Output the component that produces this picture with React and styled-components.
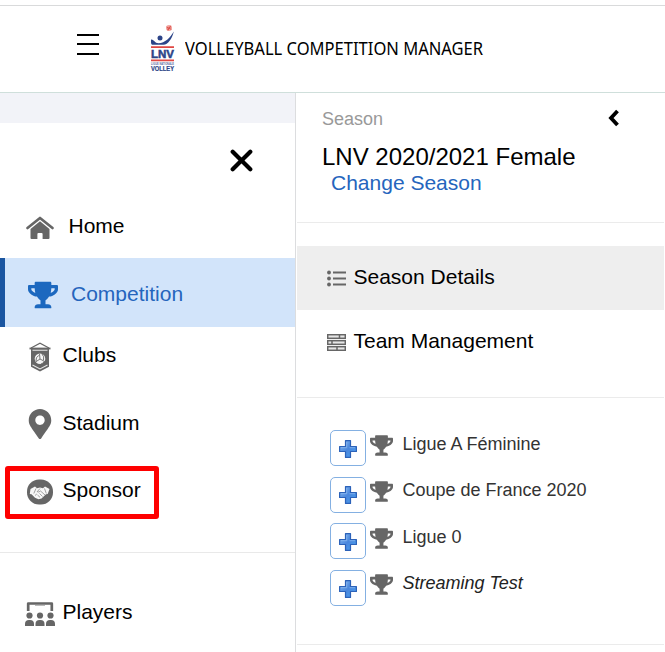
import React from 'react';
import styled, { createGlobalStyle } from 'styled-components';
import { FaTrophy, FaMapMarkerAlt } from 'react-icons/fa';

const GlobalStyle = createGlobalStyle`
  * {
    box-sizing: border-box;
  }
  body {
    margin: 0;
    background: #fff;
    color: #000;
    font-family: 'Liberation Sans', Arial, sans-serif;
  }
  svg {
    display: block;
    flex-shrink: 0;
  }
`;

const ICON_GREY = '#666';

const Page = styled.div`
  display: flex;
  flex-direction: column;
  width: 665px;
  height: 652px;
  overflow: hidden;
`;

const Header = styled.header`
  display: flex;
  align-items: center;
  flex-shrink: 0;
  height: 88px;
  margin-top: 5px;
  padding-left: 77px;
  border-top: 1px solid #d9dadb;
  border-bottom: 1px solid #cfdfdb;
`;

const IconButton = styled.button`
  display: block;
  padding: 0;
  border: none;
  background: none;
  color: inherit;
  cursor: pointer;
`;

const MenuButton = styled(IconButton)`
  margin: 0 51px 11px 0;
`;

const AppTitle = styled.h1`
  margin: 0 0 3px 7px;
  font: 400 18px/24px 'Noto Sans', sans-serif;
  white-space: nowrap;
  transform: scaleX(0.919); /* condensed look */
  transform-origin: left center;
`;

const Columns = styled.div`
  display: flex;
  flex: 1;
  min-height: 0;
`;

const Sidebar = styled.nav`
  width: 295px;
  flex-shrink: 0;
`;

const SidebarBand = styled.div`
  height: 30px;
  background: #f2f3f8;
`;

const CloseRow = styled.div`
  display: flex;
  align-items: flex-start;
  justify-content: flex-end;
  height: 70px;
  padding: 26px 42px 0 0;
`;

const NavItem = styled.a`
  position: relative;
  display: flex;
  align-items: center;
  height: ${({ $height }) => $height || 56}px;
  padding-top: ${({ $selected }) => ($selected ? 2 : 0)}px;
  padding-left: ${({ $selected }) => ($selected ? 23 : 25)}px;
  border-left: ${({ $selected }) => ($selected ? '5px solid #1a55a0' : 'none')};
  background: ${({ $selected }) => ($selected ? '#d2e4fa' : 'transparent')};
  color: ${({ $selected }) => ($selected ? '#2565bd' : '#000')};
  font-size: 21px;
  line-height: 24px;
  cursor: pointer;
`;

const NavIcon = styled.span`
  display: flex;
  justify-content: center;
  width: 30px;
  margin: 3px ${({ $gap }) => $gap || 7.5}px 0 0;
  color: ${({ $selected }) => ($selected ? '#1c68bf' : ICON_GREY)};
`;

const NavGroup = styled.div`
  display: flex;
  flex-direction: column;
  gap: 11.5px;
  padding-bottom: 34px;
  border-bottom: 1px solid #e9e9e9;
`;

const SecondaryGroup = styled.div`
  padding-top: 31px;
`;

const Highlight = styled.span`
  position: absolute;
  top: 4px;
  left: 5px;
  width: 154px;
  height: 53px;
  border: 5px solid #fe0000;
  border-radius: 3px;
`;

const Panel = styled.main`
  flex: 1;
  padding: 0 1px;
  border-left: 1px solid #dcdddf;
`;

const SeasonHeader = styled.section`
  display: flex;
  justify-content: space-between;
  height: 130px;
  padding: 16px 44px 0 25px;
  border-bottom: 1px solid #ebebeb;
`;

const SeasonLabel = styled.div`
  color: #999;
  font-size: 18px;
  line-height: 20px;
`;

const SeasonName = styled.h2`
  margin: 14px 0 0;
  font-weight: 400;
  font-size: 24px;
  line-height: 28px;
`;

const ChangeLink = styled.a`
  display: block;
  margin-left: 9px;
  color: #2565bd;
  font-size: 21px;
  line-height: 24px;
  cursor: pointer;
`;

const PanelMenu = styled.section`
  height: 175px;
  padding-top: 23px;
  border-bottom: 1px solid #ebebeb;
`;

const PanelItem = styled.a`
  display: flex;
  align-items: center;
  height: 64px;
  padding: 0 0 2px 30px;
  background: ${({ $selected }) => ($selected ? '#eee' : 'transparent')};
  font-size: 21px;
  line-height: 24px;
  cursor: pointer;

  svg {
    margin: 3px 7.5px 0 0;
  }
`;

const Competitions = styled.ul`
  display: flex;
  flex-direction: column;
  gap: 10.6px;
  height: 247px;
  margin: 0;
  padding: 32px 0 0 33px;
  border-bottom: 1px solid #ebebeb;
  list-style: none;
`;

const CompetitionRow = styled.li`
  display: flex;
  height: 36px;
  color: ${({ $italic }) => ($italic ? '#222' : '#333')};
  font-size: 18px;
  line-height: 20px;
  font-style: ${({ $italic }) => ($italic ? 'italic' : 'normal')};
`;

const ExpandButton = styled.button`
  display: flex;
  align-items: center;
  justify-content: center;
  width: 36px;
  height: 36px;
  padding: 1.5px 0 0;
  border: 1px solid #84b0e2;
  border-radius: 5px;
  background: #fff;
  cursor: pointer;
`;

const CompetitionIcon = styled.span`
  margin: 3.6px 9.4px 0 4px;
  color: ${ICON_GREY};
`;

const CompetitionName = styled.span`
  padding-top: 3.6px;
`;

const MenuIcon = () => (
  <svg width="22" height="22" viewBox="0 0 22 22">
    <path d="M0 2h22M0 11h22M0 21h22" stroke="currentColor" strokeWidth="2" />
  </svg>
);

const Logo = () => (
  <svg width="28" height="50" viewBox="0 0 28 50">
    <circle cx="19" cy="4" r="3" fill="#f3a39e" />
    <path d="M16.700 3l4.600 2.400M20.500 1.800L18 6.500M17 5.500l4-3" stroke="#dc554f" strokeWidth="1" />
    <path d="M1 15.500c3-.3 3.500 3.700 7.500 3.700C15 19 20 14 23.800 7.500 22 15 18 20.500 13.500 20.800H2C.8 20 1 18 1 15.500z" fill="#2c4488" />
    <circle cx="10" cy="14" r="2.500" fill="#2c4488" />
    <path d="M1 23.200h23M1 36.300h23" stroke="#e04743" strokeWidth="1.700" />
    <text x="1" y="33.500" textLength="23" lengthAdjust="spacingAndGlyphs" fill="#2c4488" stroke="#2c4488" strokeWidth=".5" fontFamily="Liberation Sans" fontSize="11" fontWeight="700">LNV</text>
    <text x="1" y="40.600" textLength="23" lengthAdjust="spacingAndGlyphs" fill="#5a6b9f" fontFamily="Liberation Sans" fontSize="2.700" fontWeight="700">LIGUE NATIONALE</text>
    <text x="1" y="46.800" textLength="23" lengthAdjust="spacingAndGlyphs" fill="#2c4488" stroke="#2c4488" strokeWidth=".2" fontFamily="Liberation Sans" fontSize="6.400" fontWeight="700">VOLLEY</text>
  </svg>
);

const CloseIcon = () => (
  <svg width="23" height="23" viewBox="0 0 23 23">
    <path d="M2.700 2.700l17.600 17.600M20.300 2.700L2.700 20.300" stroke="currentColor" strokeWidth="4.200" strokeLinecap="round" />
  </svg>
);

const BackIcon = () => (
  <svg width="12" height="18" viewBox="0 0 12 18">
    <path d="M9.500 2L3 9l6.500 7" fill="none" stroke="currentColor" strokeWidth="3.800" />
  </svg>
);

const HomeIcon = () => (
  <svg width="28" height="24" viewBox="0 -1 28 24">
    <path d="M1.500 12L14 1.900 26.500 12" fill="none" stroke="currentColor" strokeWidth="2.600" strokeLinecap="round" strokeLinejoin="round" />
    <path d="M14 5.300l9.500 7.800V22q0 1-1 1h-5.900v-5q0-1-1-1h-3.200q-1 0-1 1v5H5.500q-1 0-1-1v-8.900z" fill="currentColor" />
  </svg>
);

const ClubIcon = () => (
  <svg width="22" height="30" viewBox="0 0 22 30">
    <path d="M2 6l9-4.700L20 6" fill="none" stroke="currentColor" strokeWidth="1.200" />
    <path d="M.500 6.500h21" stroke="currentColor" strokeWidth="1.800" />
    <path d="M2 6.500h18v18.300l-9 4.700-9-4.700z" fill="currentColor" />
    <path d="M3.500 8.300h15M3.500 23l7.500 4 7.500-4" fill="none" stroke="#e8e8e8" strokeWidth="1.100" />
    <circle cx="11" cy="16.800" r="5.300" fill="#f4f4f4" />
    <path d="M11 17l-.5-5.200M11 17l4.800 2.500M11 17l-4.500 3M13 12q2.500 2.500 1.500 6M7 19q-.5-4 2.800-5.500M12 22q2.500-.5 3.500-3" fill="none" stroke="currentColor" strokeWidth=".9" />
  </svg>
);

const SponsorIcon = () => (
  <svg width="26" height="26" viewBox="0 0 26 26">
    <rect x="0" y=".5" width="26" height="25" rx="12" fill="currentColor" />
    <path d="M3.500 10L8 7.500l2 1.800 3-.8 3 .8 2-1.800 4.500 2.500-1.800 5-1.700.2-4.500 4.300-3 .8-3.500-1.500-3.500-3.600-1.700-.2z" fill="#f7f7f7" />
    <path d="M6.800 14.500L9 9.500M17.500 9.500l1.800 5M13 9.500l-2.800 3.200q1.500 1 3.300-.7l4.500 4M12.500 14.500l3 3M10.500 16l2.500 2.300M8 16.500l1.800-1.500" fill="none" stroke="currentColor" strokeWidth=".6" />
  </svg>
);

const PlayersIcon = () => (
  <svg width="30" height="25" viewBox="0 0 30 25">
    <path d="M3.200 10V2.500h23.600V10" fill="none" stroke="currentColor" strokeWidth="2.700" strokeLinejoin="round" />
    <path d="M10 4.500h10" stroke="#bbb" strokeWidth="1" />
    {[4.5, 15, 25.5].map((x) => (
      <React.Fragment key={x}>
        <circle cx={x} cy="14.500" r="3.100" fill="currentColor" />
        <path d={`M${x - 4.5} 25v-2q0-4 4-4h1q4 0 4 4v2z`} fill="currentColor" />
      </React.Fragment>
    ))}
  </svg>
);

const ListIcon = () => (
  <svg width="19" height="17" viewBox="0 0 19 17">
    <path d="M6 2.500h13M6 8.500h13M6 14.500h13" stroke={ICON_GREY} strokeWidth="2.200" />
    <g fill={ICON_GREY}>
      <circle cx="2" cy="2.500" r="1.900" />
      <circle cx="2" cy="8.500" r="1.900" />
      <circle cx="2" cy="14.500" r="1.900" />
    </g>
  </svg>
);

const TeamIcon = () => (
  <svg width="19" height="17" viewBox="0 0 19 17">
    <g fill="#e6e6e6" stroke={ICON_GREY} strokeWidth="1.500">
      <rect x=".7" y=".7" width="17.600" height="3.600" />
      <rect x=".7" y="6.700" width="17.600" height="3.600" />
      <rect x=".7" y="12.700" width="17.600" height="3.600" />
      <path d="M12.500 .7v3.600M5 6.700v3.600M10 12.700v3.600" />
    </g>
  </svg>
);

const PlusIcon = () => (
  <svg width="18" height="18" viewBox="0 0 18 18">
    <defs>
      <linearGradient id="plusFill" x1="0" y1="0" x2="1" y2="1">
        <stop offset="0" stopColor="#8cbcf0" />
        <stop offset=".5" stopColor="#4a87dd" />
        <stop offset="1" stopColor="#4ba1ee" />
      </linearGradient>
    </defs>
    <path d="M6.500 .6h5v5.900h5.900v5h-5.900v5.900h-5v-5.900H.6v-5h5.900z" fill="url(#plusFill)" stroke="#2c62b9" strokeWidth="1.200" strokeLinejoin="round" />
    <path d="M7.700 2v5.700H2M16 7.700h-5.500" fill="none" stroke="#8fbcf0" strokeWidth=".7" />
  </svg>
);

const COMPETITIONS = [
  { name: 'Ligue A Féminine' },
  { name: 'Coupe de France 2020' },
  { name: 'Ligue 0' },
  { name: 'Streaming Test', italic: true },
];

const App = () => (
  <Page>
    <GlobalStyle />
    <Header>
      <MenuButton aria-label="Menu"><MenuIcon /></MenuButton>
      <Logo />
      <AppTitle>VOLLEYBALL COMPETITION MANAGER</AppTitle>
    </Header>
    <Columns>
      <Sidebar>
        <SidebarBand />
        <CloseRow>
          <IconButton aria-label="Close"><CloseIcon /></IconButton>
        </CloseRow>
        <NavItem $height={65}>
          <NavIcon $gap={13.5}><HomeIcon /></NavIcon>
          Home
        </NavItem>
        <NavItem $height={69} $selected>
          <NavIcon $gap={13} $selected><FaTrophy size={30} /></NavIcon>
          Competition
        </NavItem>
        <NavGroup>
          <NavItem>
            <NavIcon><ClubIcon /></NavIcon>
            Clubs
          </NavItem>
          <NavItem>
            <NavIcon><FaMapMarkerAlt size={30} /></NavIcon>
            Stadium
          </NavItem>
          <NavItem>
            <NavIcon><SponsorIcon /></NavIcon>
            Sponsor
            <Highlight />
          </NavItem>
        </NavGroup>
        <SecondaryGroup>
          <NavItem>
            <NavIcon><PlayersIcon /></NavIcon>
            Players
          </NavItem>
        </SecondaryGroup>
      </Sidebar>
      <Panel>
        <SeasonHeader>
          <div>
            <SeasonLabel>Season</SeasonLabel>
            <SeasonName>LNV 2020/2021 Female</SeasonName>
            <ChangeLink>Change Season</ChangeLink>
          </div>
          <div>
            <IconButton aria-label="Back"><BackIcon /></IconButton>
          </div>
        </SeasonHeader>
        <PanelMenu>
          <PanelItem $selected><ListIcon />Season Details</PanelItem>
          <PanelItem><TeamIcon />Team Management</PanelItem>
        </PanelMenu>
        <Competitions>
          {COMPETITIONS.map(({ name, italic }) => (
            <CompetitionRow key={name} $italic={italic}>
              <ExpandButton aria-label="Expand"><PlusIcon /></ExpandButton>
              <CompetitionIcon><FaTrophy size={23} /></CompetitionIcon>
              <CompetitionName>{name}</CompetitionName>
            </CompetitionRow>
          ))}
        </Competitions>
      </Panel>
    </Columns>
  </Page>
);

export default App;
